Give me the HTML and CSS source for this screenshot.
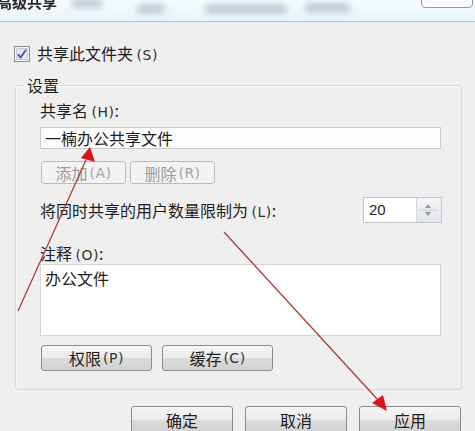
FILE: index.html
```html
<!DOCTYPE html>
<html lang="zh-CN">
<head>
    <meta charset="utf-8">
    <title>高级共享</title>
    <link rel="stylesheet" href="styles.css">
</head>
<body>
    <div id="wrap">
        <div class="titlebar">
            <span class="title">高级共享</span>
            <span class="blob b1"></span>
            <span class="blob b2"></span>
            <span class="blob b3"></span>
            <span class="blob b4"></span>
            <span class="close"></span>
        </div>

        <div class="main">
            <label class="check-row">
                <svg class="chk" width="16" height="16" viewBox="0 0 16 16">
                    <rect x="0.5" y="0.5" width="15" height="15" fill="#f4f4f4" stroke="#8e8f8f"/>
                    <rect x="2.5" y="2.5" width="11" height="11" fill="#e6e8ec" stroke="#c6cad2"/>
                    <path d="M4 8.2 L6.6 11.4 L12 3.8" fill="none" stroke="#3d5592" stroke-width="1.8"/>
                </svg>
                <span>共享此文件夹 <span class="key">(S)</span></span>
            </label>

            <fieldset class="group">
                <legend>设置</legend>
                <div class="lbl">共享名 <span class="key">(H)</span>:</div>
                <div class="field name">一楠办公共享文件</div>
                <div class="btn-row">
                    <span class="btn sm disabled">添加<span class="key">(A)</span></span>
                    <span class="btn sm disabled">删除 <span class="key">(R)</span></span>
                </div>
                <div class="limit-row">
                    <span>将同时共享的用户数量限制为 <span class="key">(L)</span>:</span>
                    <span class="spin">
                        <span class="spin-val">20</span>
                        <span class="spin-btns">
                            <svg width="22" height="22" viewBox="0 0 22 22">
                                <line x1="1" y1="11" x2="21" y2="11" stroke="#c9ced4"/>
                                <path d="M11 5 L14 9 L8 9 Z" fill="#8a9bb5"/>
                                <path d="M11 17 L14 13 L8 13 Z" fill="#8a9bb5"/>
                            </svg>
                        </span>
                    </span>
                </div>
                <div class="lbl note">注释 <span class="key">(O)</span>:</div>
                <div class="field memo">办公文件</div>
                <div class="btn-row lower">
                    <span class="btn md">权限 <span class="key">(P)</span></span>
                    <span class="btn md">缓存 <span class="key">(C)</span></span>
                </div>
            </fieldset>

            <div class="foot">
                <span class="btn lg">确定</span>
                <span class="btn lg">取消</span>
                <span class="btn lg">应用</span>
            </div>
        </div>

        <svg class="marks" width="475" height="431" viewBox="0 0 475 431">
            <line x1="18" y1="311" x2="86" y2="160" stroke="#a8403c" stroke-width="1.3"/>
            <path d="M90 147 L95 162 L81 158 Z" fill="#d81818"/>
            <line x1="224" y1="232" x2="378" y2="400" stroke="#a8403c" stroke-width="1.3"/>
            <path d="M387 411 L372 403 L383 395 Z" fill="#d81818"/>
        </svg>
    </div>
</body>
</html>
```

FILE: styles.css
```css
@charset 'utf-8';
html,body,fieldset,legend { margin:0; padding:0; }
body { background-color:#efefef; font-size:16px; color:#1e1e1e; font-family:'Noto Sans CJK SC', 'Liberation Sans', sans-serif; }

#wrap { position:relative; width:475px; height:431px; overflow:hidden; }

.key { font-family:'DejaVu Sans', sans-serif; font-size:14px; color:#333; letter-spacing:0.5px; }
.disabled .key { color:#a4a4a4; }

/* title bar */
.titlebar { position:relative; height:21px; overflow:hidden; background:linear-gradient(#f6fbfd, #e8f5fa); border-bottom:1px solid #b7bfc3; }
.titlebar .title { position:absolute; left:-3px; top:-7px; font-size:15px; line-height:18px; font-weight:bold; color:#2a2a2a; filter:blur(0.5px); }
.titlebar .blob { position:absolute; height:10px; background:#c3ccd6; border-radius:4px; filter:blur(3px); }
.titlebar .b1 { left:72px; top:-2px; width:30px; }
.titlebar .b2 { left:137px; top:4px; width:28px; }
.titlebar .b3 { left:205px; top:4px; width:82px; }
.titlebar .b4 { left:305px; top:3px; width:45px; }
.titlebar .close { position:absolute; left:421px; top:-6px; width:50px; height:12px; border:1px solid #8e9ba5; border-radius:4px; background:#fafcfd; }

.main { padding:0 13px 0 15px; }

.check-row { display:flex; align-items:center; gap:7px; height:16px; margin-top:24px; margin-left:-1px; line-height:16px; }
.check-row .chk { display:block; }

/* group box */
.group { margin:14px 0 0; padding:7px 20px 18px 24px; border:1px solid #d6d9dc; border-radius:3px; box-shadow:inset 1px 1px 0 #fafafa; }
.group legend { margin-left:-15px; padding:0 2px; line-height:18px; }

.lbl { height:18px; line-height:18px; }
.field { box-sizing:border-box; border:1px solid #c9cbcd; background:#fcfcfc; padding:0 4px; }
.field.name { height:22px; line-height:20px; margin-top:8px; }
.field.memo { height:72px; line-height:22px; margin-top:2px; padding-top:2px; background:#fff; border-color:#d3d5d7; }

.btn { display:inline-flex; align-items:center; justify-content:center; gap:2px; box-sizing:border-box; border:1px solid #8c8c8c; border-radius:3px; background:linear-gradient(#f5f5f5 0%, #ebebeb 50%, #dcdcdc 51%, #d2d2d2 100%); }
.btn.disabled { color:#9c9c9c; border-color:#b9bcbe; background:#f3f3f3; }
.btn.sm { width:85px; height:23px; }
.btn.md { width:111px; height:26px; }
.btn.lg { width:102px; height:28px; }

.btn-row { display:flex; gap:4px; margin-top:12px; margin-left:1px; }
.btn-row.lower { gap:10px; margin-top:9px; }

.limit-row { display:flex; align-items:center; justify-content:space-between; height:26px; margin-top:13px; }
.spin { display:flex; box-sizing:border-box; width:79px; height:26px; margin-right:-1px; border:1px solid #c4c6c8; background:#fff; }
.spin-val { flex:1; padding-left:5px; line-height:24px; font-family:'Liberation Sans', sans-serif; font-size:15px; }
.spin-btns { display:flex; align-items:center; width:24px; background:linear-gradient(#f3f5f7, #e3e6ea); border-left:1px solid #d4d7da; }
.spin-btns svg { display:block; }

.note { margin-top:21px; }

.foot { display:flex; justify-content:flex-end; gap:12px; margin-top:16px; margin-right:1px; }

.marks { position:absolute; left:0; top:0; pointer-events:none; }
```
